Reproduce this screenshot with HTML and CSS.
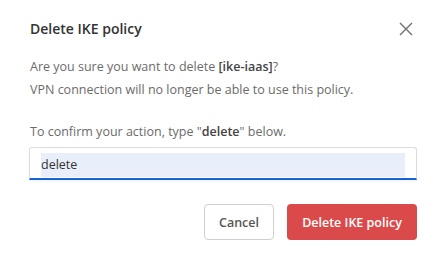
FILE: index.html
```html
<!DOCTYPE html>
<html lang="en">
  <head>
    <meta charset="UTF-8" />
    <meta name="viewport" content="width=device-width, initial-scale=1.0" />
    <link rel="stylesheet" href="styles.css">
    <title>Delete IKE policy</title>
  </head>
  <body>
    <div class="dialog">
      <div class="header">
        <div class="title">Delete IKE policy</div>
        <button class="closeButton" aria-label="Close">
          <svg width="14" height="14" viewBox="0 0 14 14">
            <path d="M1 1 L13 13 M13 1 L1 13" stroke="#6f6f6f" stroke-width="1.4" fill="none" />
          </svg>
        </button>
      </div>
      <div class="message">
        <p>Are you sure you want to delete <b>[ike-iaas]</b>?<br />VPN connection will no longer be able to use this policy.</p>
        <p>To confirm your action, type "<b>delete</b>" below.</p>
      </div>
      <div class="inputContainer">
        <input type="text" id="confirmInput" value="delete" />
      </div>
      <div class="actions">
        <button class="cancelButton">Cancel</button>
        <button class="deleteButton">Delete IKE policy</button>
      </div>
    </div>
  </body>
</html>
```

FILE: styles.css
```css
* {
    font-family: 'Open Sans', 'Noto Sans', sans-serif;
    box-sizing: border-box;
}

body {
    margin: 0;
    background: #ffffff;
}

.dialog {
    width: 441px;
    height: 269px;
    padding: 18px 24px 0 29px;
}

.header {
    display: flex;
    justify-content: space-between;
    align-items: center;
    padding-left: 1px;
}

.title {
    font-size: 14px;
    font-weight: 600;
    color: #333333;
    line-height: 22px;
}

.closeButton {
    background: none;
    border: none;
    padding: 0;
    margin-right: 4px;
    display: grid;
    place-items: center;
}

.message {
    margin-top: 15px;
    padding-left: 1px;
    color: #6b6b6b;
    font-size: 12.5px;
    line-height: 23px;
}

.message p {
    margin: 0 0 19px;
}

.message p:last-child {
    margin-bottom: 0;
}

.message b {
    font-weight: 600;
    color: #444444;
}

.inputContainer {
    margin-top: 4px;
    height: 33px;
    border: 1px solid #dcdcdc;
    border-bottom: 2px solid #1565d8;
    border-radius: 3px 3px 0 0;
    padding: 4px 11px 2px 11px;
    box-shadow: 0 1px 2px rgba(0, 0, 0, 0.06);
}

#confirmInput {
    width: 100%;
    height: 100%;
    border: none;
    outline: none;
    background: #e8effb;
    font-size: 12.5px;
    color: #333333;
    padding: 0;
}

.actions {
    display: flex;
    justify-content: flex-end;
    gap: 13px;
    margin-top: 24px;
}

.actions button {
    height: 36px;
    border-radius: 4px;
    font-size: 12.5px;
    font-weight: 600;
    cursor: pointer;
}

.cancelButton {
    width: 70px;
    background: #ffffff;
    border: 1px solid #cfcfcf;
    color: #555555;
}

.deleteButton {
    width: 130px;
    background: #db4a4a;
    border: none;
    color: #ffffff;
}
```
